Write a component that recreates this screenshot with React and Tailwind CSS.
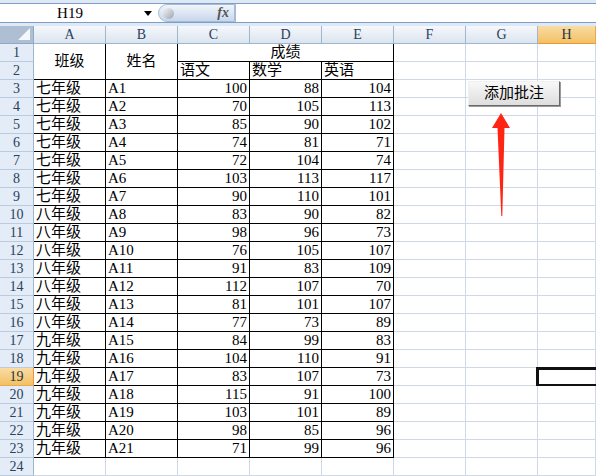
import React from 'react';

const rows = [
  ['七年级', 'A1', 100, 88, 104],
  ['七年级', 'A2', 70, 105, 113],
  ['七年级', 'A3', 85, 90, 102],
  ['七年级', 'A4', 74, 81, 71],
  ['七年级', 'A5', 72, 104, 74],
  ['七年级', 'A6', 103, 113, 117],
  ['七年级', 'A7', 90, 110, 101],
  ['八年级', 'A8', 83, 90, 82],
  ['八年级', 'A9', 98, 96, 73],
  ['八年级', 'A10', 76, 105, 107],
  ['八年级', 'A11', 91, 83, 109],
  ['八年级', 'A12', 112, 107, 70],
  ['八年级', 'A13', 81, 101, 107],
  ['八年级', 'A14', 77, 73, 89],
  ['九年级', 'A15', 84, 99, 83],
  ['九年级', 'A16', 104, 110, 91],
  ['九年级', 'A17', 83, 107, 73],
  ['九年级', 'A18', 115, 91, 100],
  ['九年级', 'A19', 103, 101, 89],
  ['九年级', 'A20', 98, 85, 96],
  ['九年级', 'A21', 71, 99, 96],
];

const cols = ['A', 'B', 'C', 'D', 'E', 'F', 'G', 'H'];

const font = "font-['Liberation_Serif','Noto_Sans_CJK_SC',serif]";
const grid = 'border-r border-b border-[#d0d7e5] bg-white';
const box = 'border-r border-b border-black bg-white';

const ColHead = ({ label, active }) => (
  <div
    className={`flex items-center justify-center text-[14px] leading-none border-r border-b ${
      active
        ? 'bg-gradient-to-b from-[#f9dba4] to-[#f2c162] border-r-[#e9a94a] border-b-[#f29436] text-[#1f3349]'
        : 'bg-gradient-to-b from-[#f5f8fc] to-[#dce4ef] border-[#9eb6ce] text-[#27415f]'
    }`}
  >
    {label}
  </div>
);

const RowHead = ({ n, active }) => (
  <div
    className={`flex items-center justify-center text-[14px] leading-none border-r border-b ${
      active
        ? 'bg-gradient-to-b from-[#f9dba4] to-[#f2c162] border-r-[#f29436] border-b-[#e9a94a] text-[#1f3349]'
        : 'bg-[#e4ecf7] border-r-[#9eb6ce] border-b-[#b9cbe0] text-[#27415f]'
    }`}
  >
    {n}
  </div>
);

const Cell = ({ children, right, className = '' }) => (
  <div
    className={`flex items-end px-[2px] text-[15px] leading-[17px] overflow-hidden whitespace-nowrap ${
      right ? 'justify-end' : 'justify-start'
    } ${className}`}
  >
    {children}
  </div>
);

const Empty = ({ selected }) => (
  <div className={`${grid} relative`}>
    {selected && (
      <div className="absolute left-[-2px] top-[-1px] w-[70px] h-[20px] border-[3px] border-[#111]" />
    )}
  </div>
);

export default function App() {
  return (
    <div className={`w-[596px] h-[476px] overflow-hidden relative bg-white text-black ${font}`}>
      {/* formula bar */}
      <div className="h-[26px] bg-[#dfe8f5] pt-[3px]">
        <div className="h-[20px] flex bg-white border-y border-[#7d9ec8]">
          <div className="w-[158px] relative flex items-center">
            <span className="w-[140px] text-center text-[15px] leading-none">H19</span>
            <span className="absolute left-[144px] top-[7px] w-0 h-0 border-x-[4px] border-x-transparent border-t-[5px] border-t-black" />
          </div>
          <div className="w-[77px] flex items-center justify-between rounded-l-full border border-[#a6bbd6] bg-gradient-to-b from-[#f1f5fb] to-[#c8d7ec] pl-[4px] pr-[5px]">
            <span className="w-[11px] h-[11px] rounded-full bg-gradient-to-br from-[#f4f4f4] to-[#9ea6b1]" />
            <span className="italic text-[14px] leading-none text-[#555] font-bold">fx</span>
          </div>
          <div className="flex-1 border-l border-[#a6bbd6]" />
        </div>
      </div>

      {/* sheet */}
      <div className="grid grid-cols-[34px_repeat(7,72px)_58px] auto-rows-[18px]">
        <div className="bg-[#aebfd4] border-r border-b border-[#8ea8c5] relative">
          <span className="absolute right-[3px] bottom-[3px] w-0 h-0 border-l-[12px] border-l-transparent border-b-[12px] border-b-[#f4f7fb]" />
        </div>
        {cols.map((c) => (
          <ColHead key={c} label={c} active={c === 'H'} />
        ))}

        {/* row 1 */}
        <RowHead n={1} />
        <div className={`${box} row-span-2 flex items-center justify-center text-[15px]`}>班级</div>
        <div className={`${box} row-span-2 flex items-center justify-center text-[15px]`}>姓名</div>
        <div className={`${box} col-span-3 flex items-end justify-center text-[15px] leading-[17px]`}>成绩</div>
        <Empty />
        <Empty />
        <Empty />

        {/* row 2 */}
        <RowHead n={2} />
        <Cell className={box}>语文</Cell>
        <Cell className={box}>数学</Cell>
        <Cell className={box}>英语</Cell>
        <Empty />
        <Empty />
        <Empty />

        {rows.map((r, i) => {
          const n = i + 3;
          return (
            <React.Fragment key={n}>
              <RowHead n={n} active={n === 19} />
              <Cell className={box}>{r[0]}</Cell>
              <Cell className={box}>{r[1]}</Cell>
              <Cell className={box} right>{r[2]}</Cell>
              <Cell className={box} right>{r[3]}</Cell>
              <Cell className={box} right>{r[4]}</Cell>
              <Empty />
              <Empty />
              <Empty selected={n === 19} />
            </React.Fragment>
          );
        })}

        {/* row 24 */}
        <RowHead n={24} />
        {cols.map((c) => (
          <Empty key={c} />
        ))}
      </div>

      {/* floating button */}
      <button className="absolute left-[468px] top-[81px] w-[92px] h-[25px] flex items-center justify-center text-[15px] leading-none bg-gradient-to-b from-[#f8f8f8] to-[#dedede] border border-t-[#f0f0f0] border-l-[#f0f0f0] border-r-[#6a6a6a] border-b-[#6a6a6a] shadow-[1px_1px_0_#9a9a9a]">
        添加批注
      </button>

      {/* red arrow */}
      <svg className="absolute left-0 top-0 pointer-events-none" width="596" height="476">
        <polygon
          points="501,113 510,128 504.5,128 502.3,216 501.3,216 497.5,128 492,128"
          fill="#ff2414"
        />
      </svg>
    </div>
  );
}
